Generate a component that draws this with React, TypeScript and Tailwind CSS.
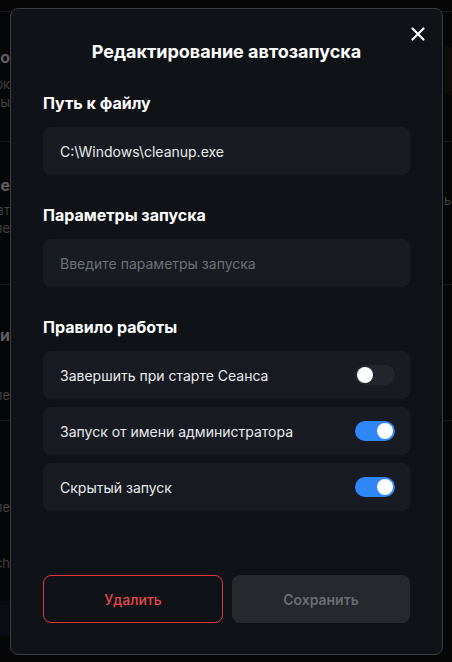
import React from "react";

function Toggle({ on }: { on: boolean }) {
  return on ? (
    <div className="flex h-[20px] w-[40px] items-center justify-end rounded-full bg-[#2f87f6] px-[2px]">
      <div className="h-[16px] w-[16px] rounded-full bg-white" />
    </div>
  ) : (
    <div className="flex h-[20px] w-[40px] items-center justify-start rounded-full bg-[#23262c] px-[2px]">
      <div className="h-[16px] w-[16px] rounded-full bg-white" />
    </div>
  );
}

function Frag({ children, bold }: { children: React.ReactNode; bold?: boolean }) {
  return (
    <div className="flex w-full justify-end overflow-hidden whitespace-nowrap">
      <span
        className={
          bold
            ? "text-[16px] leading-[20px] font-bold text-[#5c5f63]"
            : "text-[13px] leading-[18px] text-[#3e4043]"
        }
      >
        {children}
      </span>
    </div>
  );
}

export default function App() {
  const font = { fontFamily: "Inter, 'Noto Sans', sans-serif" };
  return (
    <div className="relative h-[662px] w-[452px] overflow-hidden bg-[#060606]" style={font}>
      {/* background page (dimmed) */}
      <div className="flex h-full flex-col">
        <div className="h-[12px] border-b border-[#181818]" />
        <div className="flex h-[130px] justify-between border-b border-[#181818]">
          <div className="flex w-[10px] flex-col pt-[35px]">
            <Frag bold>Автоо</Frag>
            <div className="mt-[8px]" />
            <Frag>Блок</Frag>
            <Frag>выбы</Frag>
          </div>
          <div className="w-[8px] pt-[35px]">
            <div className="h-[48px] bg-[#0e0c0a]" />
          </div>
        </div>
        <div className="flex h-[143px] justify-between border-b border-[#181818]">
          <div className="flex w-[10px] flex-col pt-[33px]">
            <Frag bold>Заве</Frag>
            <div className="mt-[6px]" />
            <Frag>Авт</Frag>
            <Frag>выпе</Frag>
          </div>
          <div className="w-[8px] pt-[49px]">
            <div className="flex w-full justify-start overflow-hidden whitespace-nowrap">
              <span className="text-[13px] leading-[18px] text-[#3e4043]">ь</span>
            </div>
          </div>
        </div>
        <div className="flex h-[136px] justify-between border-b border-[#181818]">
          <div className="flex w-[10px] flex-col pt-[40px]">
            <Frag bold>Прои</Frag>
            <div className="mt-[41px]" />
            <Frag>Выпе</Frag>
          </div>
        </div>
        <div className="flex flex-1 flex-col">
          <div className="flex w-[10px] flex-col pt-[77px]">
            <Frag>Выпе</Frag>
            <div className="mt-[38px]" />
            <Frag>Fetch</Frag>
          </div>
          <div className="mt-[29px] h-[35px] w-[10px] bg-[#0a0c13]" />
        </div>
      </div>

      {/* modal */}
      <div className="absolute left-[10px] top-[8px] flex h-[647px] w-[433px] flex-col rounded-[8px] border border-[#3a3d42] bg-[#0f1216] px-[32px] pb-[31px] pt-[31px]">
        <button className="absolute right-[16px] top-[17px] flex h-[16px] w-[16px] items-center justify-center text-white">
          <svg width="16" height="16" viewBox="0 0 16 16" fill="none" stroke="currentColor" strokeWidth="2.2" strokeLinecap="round">
            <path d="M2.5 2.5 L13.5 13.5 M13.5 2.5 L2.5 13.5" />
          </svg>
        </button>
        <h2 className="text-center text-[18px] leading-[24px] font-bold text-white">
          Редактирование автозапуска
        </h2>

        <div className="mt-[27px] text-[16px] leading-[24px] font-bold text-white">Путь к файлу</div>
        <div className="mt-[12px] flex h-[48px] items-center rounded-[8px] bg-[#181c22] px-[17px] text-[14px] text-[#e8eaed]">
          C:\Windows\cleanup.exe
        </div>

        <div className="mt-[28px] text-[16px] leading-[24px] font-bold text-white">Параметры запуска</div>
        <div className="mt-[12px] flex h-[48px] items-center rounded-[8px] bg-[#181c22] px-[17px] text-[14px] text-[#6c7077]">
          Введите параметры запуска
        </div>

        <div className="mt-[28px] text-[16px] leading-[24px] font-bold text-white">Правило работы</div>
        <div className="mt-[12px] flex flex-col gap-[8px]">
          {[
            { t: "Завершить при старте Сеанса", on: false },
            { t: "Запуск от имени администратора", on: true },
            { t: "Скрытый запуск", on: true },
          ].map((r) => (
            <div
              key={r.t}
              className="flex h-[48px] items-center justify-between rounded-[8px] bg-[#181c22] pl-[17px] pr-[15px] text-[14px] text-[#e8eaed]"
            >
              <span>{r.t}</span>
              <Toggle on={r.on} />
            </div>
          ))}
        </div>

        <div className="mt-auto flex gap-[9px]">
          <button className="flex h-[48px] flex-1 items-center justify-center rounded-[8px] border border-[#e0383d] text-[14px] font-medium text-[#e5484d]">
            Удалить
          </button>
          <button className="flex h-[48px] flex-1 items-center justify-center rounded-[8px] bg-[#25282d] text-[14px] font-semibold text-[#6a6d72]">
            Сохранить
          </button>
        </div>
      </div>
    </div>
  );
}
